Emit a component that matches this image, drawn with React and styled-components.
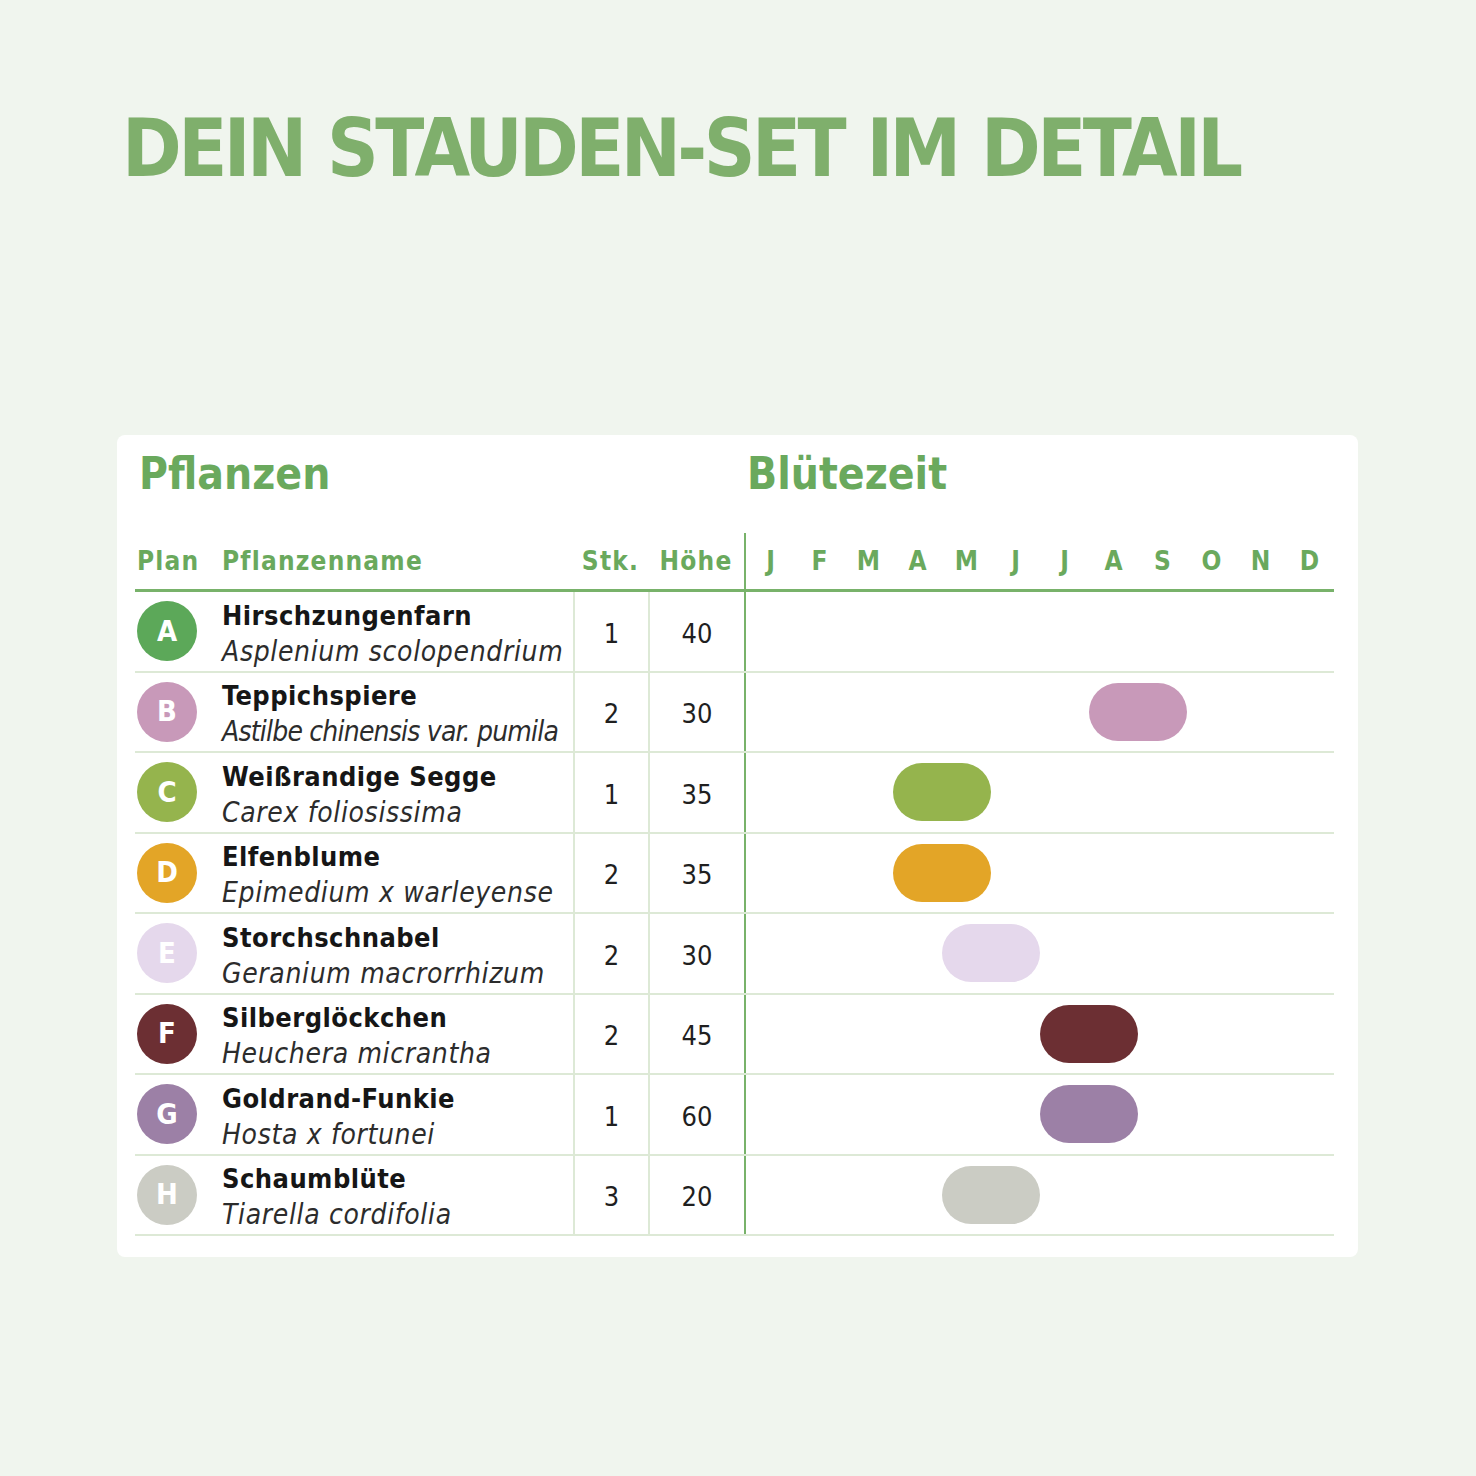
import React from 'react';
import styled, { createGlobalStyle } from 'styled-components';

const GlobalStyle = createGlobalStyle`
  html, body {
    margin: 0;
    padding: 0;
    background: #f0f5ee;
  }
  * {
    box-sizing: border-box;
  }
`;

const MONTHS = ['J', 'F', 'M', 'A', 'M', 'J', 'J', 'A', 'S', 'O', 'N', 'D'];

const PLANTS = [
  { key: 'A', name: 'Hirschzungenfarn', latin: 'Asplenium scolopendrium', qty: 1, height: 40, color: '#5ca859', start: null, span: 0 },
  { key: 'B', name: 'Teppichspiere', latin: 'Astilbe chinensis var. pumila', qty: 2, height: 30, color: '#c899b9', start: 8, span: 2, tight: true },
  { key: 'C', name: 'Weißrandige Segge', latin: 'Carex foliosissima', qty: 1, height: 35, color: '#95b44d', start: 4, span: 2 },
  { key: 'D', name: 'Elfenblume', latin: 'Epimedium x warleyense', qty: 2, height: 35, color: '#e3a527', start: 4, span: 2 },
  { key: 'E', name: 'Storchschnabel', latin: 'Geranium macrorrhizum', qty: 2, height: 30, color: '#e5d8ec', start: 5, span: 2 },
  { key: 'F', name: 'Silberglöckchen', latin: 'Heuchera micrantha', qty: 2, height: 45, color: '#6c2f33', start: 7, span: 2 },
  { key: 'G', name: 'Goldrand-Funkie', latin: 'Hosta x fortunei', qty: 1, height: 60, color: '#9c80a6', start: 7, span: 2 },
  { key: 'H', name: 'Schaumblüte', latin: 'Tiarella cordifolia', qty: 3, height: 20, color: '#cbccc4', start: 5, span: 2 },
];

const COLS = '87px 351px 75px 96px 590px';

const Page = styled.div`
  padding: 109px 0 0 0;
  min-height: 1476px;
  font-family: "DejaVu Sans Condensed", "DejaVu Sans", sans-serif;
`;

const Title = styled.h1`
  margin: 0 0 246px 122px;
  font-weight: 700;
  font-size: 80px;
  line-height: 1;
  letter-spacing: -3.6px;
  word-spacing: 2px;
  color: #7faf6c;
  white-space: nowrap;
`;

const Card = styled.div`
  margin-left: 117px;
  width: 1241px;
  height: 822px;
  background: #ffffff;
  border-radius: 8px;
  padding: 17px 24px 0 18px;
`;

const SectionRow = styled.div`
  display: grid;
  grid-template-columns: 609px 590px;
  margin-bottom: 37px;
`;

const SectionTitle = styled.h2`
  margin: 0;
  padding-left: ${p => p.$inset}px;
  font-weight: 700;
  font-size: 44px;
  line-height: 1;
  letter-spacing: 0;
  color: #6aa95d;
`;

const HeaderRow = styled.div`
  display: grid;
  grid-template-columns: ${COLS};
  height: 59px;
  border-bottom: 3px solid #78b26a;
`;

const HeadCell = styled.div`
  display: flex;
  align-items: flex-end;
  justify-content: ${p => (p.$center ? 'center' : 'flex-start')};
  padding: 0 0 15px ${p => p.$pad || 0}px;
  font-weight: 700;
  font-size: 26px;
  line-height: 1;
  letter-spacing: 1.2px;
  color: #6aa95d;
`;

const MonthHead = styled.div`
  display: grid;
  grid-template-columns: repeat(12, 49px);
  border-left: 2px solid #78b26a;
  padding-bottom: 15px;
  align-items: end;
`;

const MonthLetter = styled.span`
  text-align: center;
  font-weight: 700;
  font-size: 26px;
  line-height: 1;
  color: #6aa95d;
`;

const Row = styled.div`
  display: grid;
  grid-template-columns: ${COLS};
  height: 80.5px;
  border-bottom: 2px solid #dde9d6;
`;

const PlanCell = styled.div`
  display: flex;
  align-items: center;
  padding-left: 2px;
`;

const Badge = styled.div`
  width: 60px;
  height: 60px;
  border-radius: 50%;
  background: ${p => p.$color};
  color: #ffffff;
  display: flex;
  align-items: center;
  justify-content: center;
  font-weight: 700;
  font-size: 29px;
  line-height: 1;
`;

const NameCell = styled.div`
  display: flex;
  flex-direction: column;
  justify-content: center;
  padding-top: 5px;
  white-space: nowrap;
`;

const Name = styled.span`
  font-weight: 700;
  font-size: 27px;
  line-height: 32px;
  letter-spacing: 0.45px;
  color: #161616;
`;

const Latin = styled.span`
  margin-top: 4px;
  font-style: italic;
  font-size: 28px;
  line-height: 32px;
  letter-spacing: ${p => (p.$tight ? '-0.8px' : '0.65px')};
  color: #2c2c2c;
`;

const NumCell = styled.div`
  display: flex;
  align-items: center;
  justify-content: center;
  padding-top: 4px;
  border-left: 2px solid #dde9d6;
  font-size: 27px;
  color: #1f1f1f;
`;

const Timeline = styled.div`
  display: grid;
  grid-template-columns: repeat(12, 49px);
  align-items: center;
  border-left: 2px solid #78b26a;
`;

const Bar = styled.div`
  height: 58px;
  border-radius: 29px;
  background: ${p => p.$color};
`;

function PlantRow({ plant }) {
  return (
    <Row>
      <PlanCell>
        <Badge $color={plant.color}>{plant.key}</Badge>
      </PlanCell>
      <NameCell>
        <Name>{plant.name}</Name>
        <Latin $tight={plant.tight}>{plant.latin}</Latin>
      </NameCell>
      <NumCell>{plant.qty}</NumCell>
      <NumCell>{plant.height}</NumCell>
      <Timeline>
        {plant.start && (
          <Bar
            $color={plant.color}
            style={{ gridColumn: `${plant.start} / span ${plant.span}` }}
          />
        )}
      </Timeline>
    </Row>
  );
}

export default function App() {
  return (
    <Page>
      <GlobalStyle />
      <Title>DEIN STAUDEN-SET IM DETAIL</Title>
      <Card>
        <SectionRow>
          <SectionTitle $inset={4}>Pflanzen</SectionTitle>
          <SectionTitle $inset={3}>Blütezeit</SectionTitle>
        </SectionRow>
        <HeaderRow>
          <HeadCell $pad={2}>Plan</HeadCell>
          <HeadCell>Pflanzenname</HeadCell>
          <HeadCell $center>Stk.</HeadCell>
          <HeadCell $center>Höhe</HeadCell>
          <MonthHead>
            {MONTHS.map((m, i) => (
              <MonthLetter key={i}>{m}</MonthLetter>
            ))}
          </MonthHead>
        </HeaderRow>
        {PLANTS.map(p => (
          <PlantRow key={p.key} plant={p} />
        ))}
      </Card>
    </Page>
  );
}
